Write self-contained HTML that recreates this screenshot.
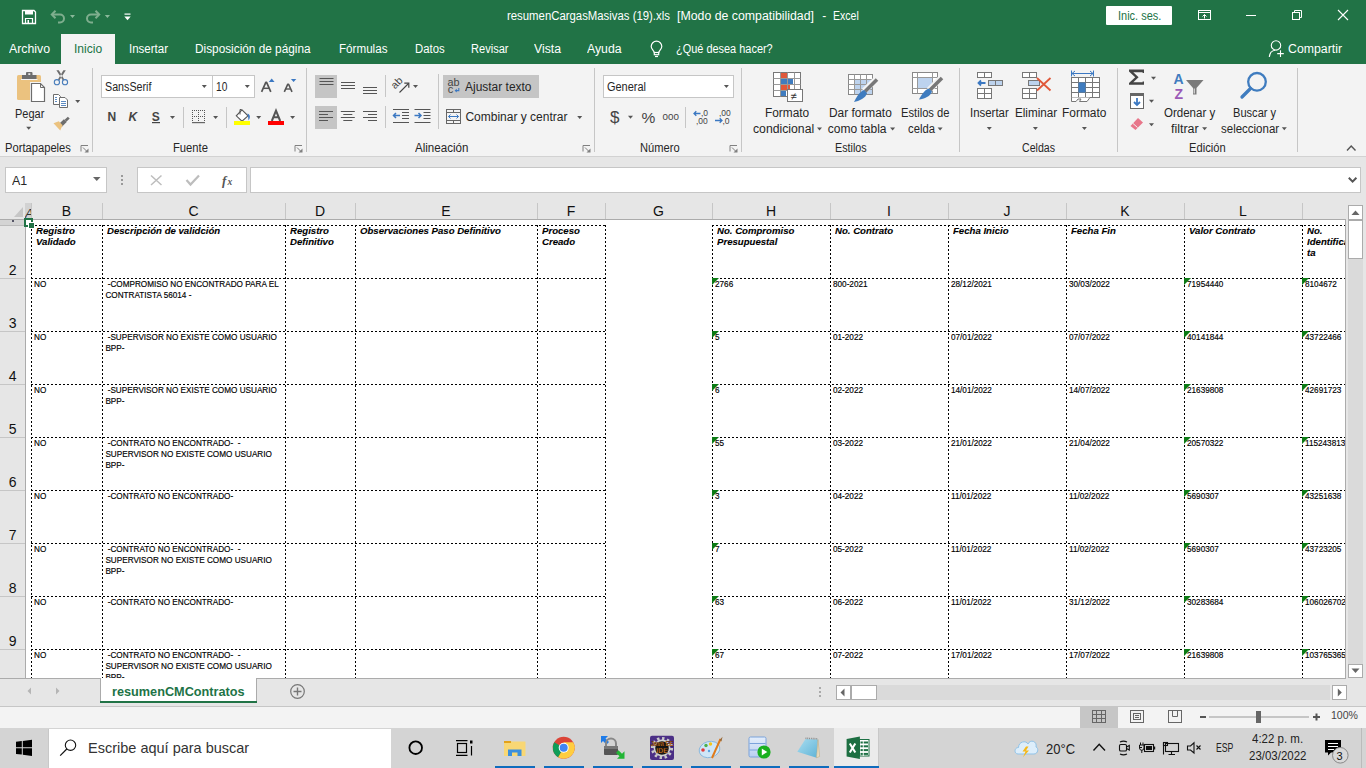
<!DOCTYPE html><html><head><meta charset="utf-8"><style>
*{box-sizing:border-box}
body{margin:0;width:1366px;height:768px;position:relative;overflow:hidden;font-family:"Liberation Sans",sans-serif;background:#fff;color:#262626}
.ab{position:absolute}
.t{position:absolute;white-space:pre;line-height:1;transform-origin:0 0}
.sep{position:absolute;width:1px;background:#c8c8c8}
.hd{position:absolute;background-image:repeating-linear-gradient(90deg,#000 0 2px,transparent 2px 4px);height:1px}
.vd{position:absolute;background-image:repeating-linear-gradient(180deg,#000 0 2px,transparent 2px 4px);width:1px}
.cell{position:absolute;font-size:8.18px;-webkit-text-stroke:0.15px #000;line-height:11px;color:#000;white-space:pre}
.hcell{position:absolute;font-size:8.5px;line-height:11px;color:#000;font-weight:bold;font-style:italic;white-space:pre;transform:scaleX(1.13);transform-origin:0 0;-webkit-text-stroke:0.1px #000}
svg{overflow:visible}
</style></head><body>

<div class="ab" style="left:0;top:0;width:1366px;height:64px;background:#217346"></div>
<div class="t" style="left:506.50px;top:9.84px;font-size:12px;color:#fff;transform:scaleX(0.9467);">resumenCargasMasivas (19).xls</div>
<div class="t" style="left:676.70px;top:9.84px;font-size:12px;color:#fff;transform:scaleX(1.0268);">[Modo de compatibilidad]</div>
<div class="t" style="left:822.30px;top:9.84px;font-size:12px;color:#fff;">-</div>
<div class="t" style="left:832.70px;top:9.84px;font-size:12px;color:#fff;transform:scaleX(0.8792);">Excel</div>
<div class="ab" style="left:1106px;top:6px;width:66px;height:19px;background:#fff;border-radius:1px"></div>
<div class="t" style="left:1117.50px;top:9.84px;font-size:12px;color:#217346;transform:scaleX(0.9143);">Inic. ses.</div>
<div class="ab" style="left:61px;top:34px;width:54px;height:30px;background:#f3f3f3"></div>
<div class="t" style="left:9.00px;top:42.84px;font-size:12px;color:#fff;transform:scaleX(1.0246);">Archivo</div>
<div class="t" style="left:73.80px;top:42.84px;font-size:12px;color:#217346;transform:scaleX(1.0066);">Inicio</div>
<div class="t" style="left:129.00px;top:42.84px;font-size:12px;color:#fff;transform:scaleX(0.9585);">Insertar</div>
<div class="t" style="left:195.40px;top:42.84px;font-size:12px;color:#fff;transform:scaleX(0.9845);">Disposición de página</div>
<div class="t" style="left:338.50px;top:42.84px;font-size:12px;color:#fff;transform:scaleX(0.9697);">Fórmulas</div>
<div class="t" style="left:414.60px;top:42.84px;font-size:12px;color:#fff;transform:scaleX(0.9439);">Datos</div>
<div class="t" style="left:471.00px;top:42.84px;font-size:12px;color:#fff;transform:scaleX(0.9217);">Revisar</div>
<div class="t" style="left:534.00px;top:42.84px;font-size:12px;color:#fff;transform:scaleX(1.0201);">Vista</div>
<div class="t" style="left:587.00px;top:42.84px;font-size:12px;color:#fff;transform:scaleX(1.0203);">Ayuda</div>
<div class="t" style="left:676.00px;top:42.84px;font-size:12px;color:#fff;transform:scaleX(0.9116);">¿Qué desea hacer?</div>
<div class="t" style="left:1288.00px;top:42.84px;font-size:12px;color:#fff;transform:scaleX(1.0249);">Compartir</div>
<svg class="ab" style="left:0;top:0" width="1366" height="64">
<path d="M22.5 10.5 H34 L35.5 12 V23.5 H22.5 Z" fill="none" stroke="#fff" stroke-width="1.3"/>
<rect x="25" y="10.5" width="8" height="4" fill="#fff"/><path d="M25.5 23.5 V18.5 H32.5 V23.5" fill="none" stroke="#fff" stroke-width="1.2"/><rect x="27.5" y="20" width="1.5" height="3" fill="#fff"/>
<g stroke="#7fae8e" stroke-width="2" fill="none"><path d="M52 14.5 H60 A4 4 0 0 1 60 22.5 H58"/><path d="M55.5 10.8 L51.8 14.5 L55.5 18.2"/>
<path d="M99 14.5 H91 A4 4 0 0 0 91 22.5 H93"/><path d="M95.5 10.8 L99.2 14.5 L95.5 18.2"/></g>
<path d="M70 15 H75 L72.5 18 Z M104.8 15 H110 L107.4 18 Z" fill="#8ab89a"/>
<rect x="124.5" y="13.5" width="6" height="1.2" fill="#fff"/><path d="M124.3 16.5 H130.7 L127.5 20.3 Z" fill="#fff"/>
<g fill="none" stroke="#fff" stroke-width="1"><rect x="1198.5" y="10.5" width="12" height="9"/><path d="M1198.5 12.5 H1210.5"/><path d="M1204.5 18.5 V14.5 M1202.5 16.5 L1204.5 14.5 L1206.5 16.5"/></g>
<path d="M1246 15.5 H1256" stroke="#fff" stroke-width="1"/>
<g fill="none" stroke="#fff" stroke-width="1"><rect x="1292.5" y="12.5" width="7" height="7"/><path d="M1294.5 12.5 V10.5 H1301.5 V17.5 H1299.5"/></g>
<path d="M1338 10 L1348 20 M1348 10 L1338 20" stroke="#fff" stroke-width="1.1"/>
<g fill="none" stroke="#fff" stroke-width="1.2"><path d="M654.3 52.5 C653.8 50.5 651.2 49 651.2 46.5 A5.3 5.3 0 0 1 661.8 46.5 C661.8 49 659.2 50.5 658.7 52.5 Z"/><rect x="654.3" y="52.5" width="4.4" height="2.2"/><path d="M655 56.5 H658"/></g>
<g fill="none" stroke="#fff" stroke-width="1.1"><circle cx="1276" cy="45.4" r="4.7"/><path d="M1269.3 57 C1269.6 53 1272 50.8 1275 50.3"/><path d="M1280.5 50.3 V57 M1277.2 53.6 H1283.8"/></g>
</svg>
<div class="ab" style="left:0;top:64px;width:1366px;height:92px;background:#f3f3f3"></div>
<div class="ab" style="left:0;top:156px;width:1366px;height:1px;background:#d2d2d2"></div>
<div class="sep" style="left:92px;top:68px;height:84px;background:#c6c6c6"></div>
<div class="sep" style="left:306px;top:68px;height:84px;background:#c6c6c6"></div>
<div class="sep" style="left:594px;top:68px;height:84px;background:#c6c6c6"></div>
<div class="sep" style="left:741px;top:68px;height:84px;background:#c6c6c6"></div>
<div class="sep" style="left:959px;top:68px;height:84px;background:#c6c6c6"></div>
<div class="sep" style="left:1117px;top:68px;height:84px;background:#c6c6c6"></div>
<div class="sep" style="left:1297px;top:68px;height:84px;background:#c6c6c6"></div>
<div class="t" style="left:4.50px;top:141.54px;font-size:12px;color:#262626;transform:scaleX(0.9319);">Portapapeles</div>
<div class="t" style="left:173.40px;top:141.54px;font-size:12px;color:#262626;transform:scaleX(0.9368);">Fuente</div>
<div class="t" style="left:415.30px;top:141.54px;font-size:12px;color:#262626;transform:scaleX(0.9643);">Alineación</div>
<div class="t" style="left:639.80px;top:141.54px;font-size:12px;color:#262626;transform:scaleX(0.9277);">Número</div>
<div class="t" style="left:834.70px;top:141.54px;font-size:12px;color:#262626;transform:scaleX(0.8969);">Estilos</div>
<div class="t" style="left:1021.50px;top:141.54px;font-size:12px;color:#262626;transform:scaleX(0.8833);">Celdas</div>
<div class="t" style="left:1188.70px;top:141.54px;font-size:12px;color:#262626;transform:scaleX(0.9299);">Edición</div>
<div class="ab" style="left:101px;top:75px;width:112px;height:23px;background:#fff;border:1px solid #c6c6c6"></div>
<div class="ab" style="left:212px;top:75px;width:43px;height:23px;background:#fff;border:1px solid #c6c6c6"></div>
<div class="ab" style="left:603px;top:75px;width:131px;height:23px;background:#fff;border:1px solid #c6c6c6"></div>
<div class="ab" style="left:315px;top:75px;width:22px;height:23px;background:#c5c5c5"></div>
<div class="ab" style="left:315px;top:106px;width:22px;height:23px;background:#c5c5c5"></div>
<div class="ab" style="left:443px;top:75px;width:96px;height:23px;background:#c5c5c5"></div>
<div class="t" style="left:14.60px;top:107.64px;font-size:12px;color:#262626;transform:scaleX(0.9147);">Pegar</div>
<div class="t" style="left:104.50px;top:81.34px;font-size:12px;color:#262626;transform:scaleX(0.8918);">SansSerif</div>
<div class="t" style="left:215.60px;top:81.34px;font-size:12px;color:#262626;transform:scaleX(0.8458);">10</div>
<div class="t" style="left:465.20px;top:80.64px;font-size:12px;color:#262626;transform:scaleX(0.9970);">Ajustar texto</div>
<div class="t" style="left:465.40px;top:111.34px;font-size:12px;color:#262626;">Combinar y centrar</div>
<div class="t" style="left:606.60px;top:81.34px;font-size:12px;color:#262626;transform:scaleX(0.9133);">General</div>
<div class="t" style="left:765.40px;top:106.64px;font-size:12px;color:#262626;transform:scaleX(0.9891);">Formato</div>
<div class="t" style="left:752.60px;top:123.04px;font-size:12px;color:#262626;transform:scaleX(1.0192);">condicional</div>
<div class="t" style="left:829.40px;top:106.64px;font-size:12px;color:#262626;transform:scaleX(0.9912);">Dar formato</div>
<div class="t" style="left:827.80px;top:123.04px;font-size:12px;color:#262626;">como tabla</div>
<div class="t" style="left:900.50px;top:106.64px;font-size:12px;color:#262626;transform:scaleX(0.9321);">Estilos de</div>
<div class="t" style="left:907.50px;top:123.04px;font-size:12px;color:#262626;transform:scaleX(0.9377);">celda</div>
<div class="t" style="left:970.20px;top:106.54px;font-size:12px;color:#262626;transform:scaleX(0.9512);">Insertar</div>
<div class="t" style="left:1014.60px;top:106.54px;font-size:12px;color:#262626;transform:scaleX(0.9713);">Eliminar</div>
<div class="t" style="left:1062.40px;top:106.54px;font-size:12px;color:#262626;transform:scaleX(0.9936);">Formato</div>
<div class="t" style="left:1163.80px;top:106.84px;font-size:12px;color:#262626;transform:scaleX(0.9595);">Ordenar y</div>
<div class="t" style="left:1170.90px;top:123.14px;font-size:12px;color:#262626;transform:scaleX(1.0385);">filtrar</div>
<div class="t" style="left:1232.80px;top:106.84px;font-size:12px;color:#262626;transform:scaleX(0.9232);">Buscar y</div>
<div class="t" style="left:1220.60px;top:123.14px;font-size:12px;color:#262626;transform:scaleX(0.9571);">seleccionar</div>
<svg class="ab" style="left:0;top:0" width="1366" height="200">
<rect x="17" y="75" width="24" height="25" rx="1.5" fill="#EBC27F"/>
<rect x="22" y="75" width="14.5" height="4" fill="#6D6D6D"/><rect x="26" y="72" width="6.5" height="4" rx="1" fill="#6D6D6D"/><rect x="28.3" y="73.3" width="2" height="1.6" fill="#f3f3f3"/>
<rect x="21" y="79" width="16.5" height="1" fill="#f3f3f3"/>
<path d="M30 82 H41 L46 87 V103 H30 Z" fill="#f3f3f3"/>
<path d="M31.5 83.5 H40.5 L44.5 87.5 V101.5 H31.5 Z" fill="#fff" stroke="#6D6D6D" stroke-width="1.2"/>
<path d="M40.5 83.5 V87.5 H44.5" fill="none" stroke="#6D6D6D" stroke-width="1"/>
<path d="M26.2 126.80000000000001 H31.2 L28.7 129.8 Z" fill="#555"/>
<path d="M56.4 70.3 L58.8 70.3 L64.3 79.4 L62.9 80.4 Z M65.8 70.3 L63.4 70.3 L57.9 79.4 L59.3 80.4 Z" fill="#6D6D6D"/>
<circle cx="56.9" cy="82.2" r="2.6" fill="none" stroke="#4A7EBB" stroke-width="1.1"/><circle cx="65" cy="82.2" r="2.6" fill="none" stroke="#4A7EBB" stroke-width="1.1"/>
<path d="M53.5 94.5 H58.5 L60.5 96.5 V104.5 H53.5 Z" fill="#fff" stroke="#6D6D6D" stroke-width="1"/>
<path d="M55 97.5 H57 M55 99.5 H57 M55 101.5 H57" stroke="#4A7EBB" stroke-width="0.9"/>
<path d="M59.5 97.5 H65 L67.5 100 V107.5 H59.5 Z" fill="#fff" stroke="#6D6D6D" stroke-width="1"/>
<path d="M61 101.5 H66 M61 103.5 H66 M61 105.5 H66" stroke="#4A7EBB" stroke-width="0.9"/>
<path d="M75.2 99.9 H80.2 L77.7 102.9 Z" fill="#555"/>
<path d="M65.5 120.8 L68.8 117.6" stroke="#6D6D6D" stroke-width="2.6"/>
<path d="M60.3 125.5 L65.3 120.6" stroke="#6D6D6D" stroke-width="4"/>
<path d="M53.5 123.2 L58.8 121.2 L62.6 125.2 L60.2 130.5 Z" fill="#EBC27F"/>
<g fill="none" stroke="#808080" stroke-width="1"><path d="M88.0 145.5 H81.0 V151.5"/><path d="M83.0 147.5 L87.5 152"/></g><path d="M88.5 148.5 V152.5 H84.5 Z" fill="#808080"/>
<g fill="none" stroke="#808080" stroke-width="1"><path d="M302.0 145.5 H295.0 V151.5"/><path d="M297.0 147.5 L301.5 152"/></g><path d="M302.5 148.5 V152.5 H298.5 Z" fill="#808080"/>
<g fill="none" stroke="#808080" stroke-width="1"><path d="M590.0 145.5 H583.0 V151.5"/><path d="M585.0 147.5 L589.5 152"/></g><path d="M590.5 148.5 V152.5 H586.5 Z" fill="#808080"/>
<g fill="none" stroke="#808080" stroke-width="1"><path d="M737.0 145.5 H730.0 V151.5"/><path d="M732.0 147.5 L736.5 152"/></g><path d="M737.5 148.5 V152.5 H733.5 Z" fill="#808080"/>
<path d="M201.8 85.0 H206.8 L204.3 88.0 Z" fill="#555"/>
<path d="M244.8 85.0 H249.8 L247.3 88.0 Z" fill="#555"/>
<path d="M261.6 91.9 L265.8 82.3 H266.6 L270.8 91.9" fill="none" stroke="#555" stroke-width="1.7" stroke-linejoin="round"/><path d="M263.4 88.3 H269" stroke="#555" stroke-width="1.5"/>
<path d="M268.8 81.9 L271.7 78.6 L274.6 81.9 Z" fill="#3B78C2"/>
<path d="M284.3 91.9 L287.8 84.2 H288.6 L292 91.9" fill="none" stroke="#555" stroke-width="1.6" stroke-linejoin="round"/><path d="M285.8 89 H290.5" stroke="#555" stroke-width="1.4"/>
<path d="M290.9 78.9 H296.3 L293.6 82.1 Z" fill="#3B78C2"/>
<text x="107.5" y="121.3" font-size="12" font-weight="bold" fill="#444" font-family="Liberation Sans">N</text>
<text x="128.5" y="121.3" font-size="12" font-weight="bold" font-style="italic" fill="#444" font-family="Liberation Sans">K</text>
<text x="151.8" y="121.3" font-size="12" font-weight="bold" fill="#444" font-family="Liberation Sans">S</text>
<rect x="152" y="122" width="8" height="1.2" fill="#444"/>
<path d="M170.0 115.9 H175.0 L172.5 118.9 Z" fill="#555"/>
<rect x="183" y="107" width="1" height="21" fill="#c6c6c6"/><rect x="226" y="107" width="1" height="21" fill="#c6c6c6"/>
<rect x="192" y="110" width="1" height="1" fill="#555"/><rect x="192" y="112" width="1" height="1" fill="#555"/><rect x="192" y="114" width="1" height="1" fill="#555"/><rect x="192" y="116" width="1" height="1" fill="#555"/><rect x="192" y="118" width="1" height="1" fill="#555"/><rect x="192" y="120" width="1" height="1" fill="#555"/><rect x="194" y="110" width="1" height="1" fill="#555"/><rect x="194" y="116" width="1" height="1" fill="#555"/><rect x="196" y="110" width="1" height="1" fill="#555"/><rect x="196" y="116" width="1" height="1" fill="#555"/><rect x="198" y="110" width="1" height="1" fill="#555"/><rect x="198" y="112" width="1" height="1" fill="#555"/><rect x="198" y="114" width="1" height="1" fill="#555"/><rect x="198" y="116" width="1" height="1" fill="#555"/><rect x="198" y="118" width="1" height="1" fill="#555"/><rect x="198" y="120" width="1" height="1" fill="#555"/><rect x="200" y="110" width="1" height="1" fill="#555"/><rect x="200" y="116" width="1" height="1" fill="#555"/><rect x="202" y="110" width="1" height="1" fill="#555"/><rect x="202" y="116" width="1" height="1" fill="#555"/><rect x="204" y="110" width="1" height="1" fill="#555"/><rect x="204" y="112" width="1" height="1" fill="#555"/><rect x="204" y="114" width="1" height="1" fill="#555"/><rect x="204" y="116" width="1" height="1" fill="#555"/><rect x="204" y="118" width="1" height="1" fill="#555"/><rect x="204" y="120" width="1" height="1" fill="#555"/><rect x="192" y="122" width="13" height="1.2" fill="#666"/>
<path d="M213.1 115.9 H218.1 L215.6 118.9 Z" fill="#555"/>
<path d="M242 109.8 L248 115.8 L242 121.2 L236.3 115.8 Z" fill="#fff" stroke="#555" stroke-width="1.1"/><path d="M240 109.5 V114.5 M240 109.5 H241.5" fill="none" stroke="#555" stroke-width="1"/><path d="M247.5 113.5 C250.5 114.5 250.5 118 248.5 120.5 L248 116 Z" fill="#3B78C2"/>
<rect x="234" y="121" width="16" height="4" fill="#FFFF00"/>
<path d="M256.2 115.9 H261.2 L258.7 118.9 Z" fill="#555"/>
<path d="M271.8 121 L276 110.7 L280.2 121 M273.6 117.2 H278.4" fill="none" stroke="#555" stroke-width="2"/>
<rect x="268" y="121" width="16" height="4" fill="#FF0000"/>
<path d="M290.1 115.9 H295.1 L292.6 118.9 Z" fill="#555"/>
<rect x="319.5" y="78" width="14" height="1" fill="#555"/>
<rect x="319.5" y="81" width="14" height="1" fill="#555"/>
<rect x="319.5" y="84" width="14" height="1" fill="#555"/>
<rect x="341" y="82" width="14" height="1" fill="#555"/>
<rect x="341" y="85" width="14" height="1" fill="#555"/>
<rect x="341" y="88" width="14" height="1" fill="#555"/>
<rect x="363" y="87" width="14" height="1" fill="#555"/>
<rect x="363" y="90" width="14" height="1" fill="#555"/>
<rect x="363" y="93" width="14" height="1" fill="#555"/>
<rect x="385" y="75" width="1" height="22" fill="#c6c6c6"/><rect x="438" y="74" width="1" height="55" fill="#c6c6c6"/><rect x="385" y="106" width="1" height="22" fill="#c6c6c6"/>
<text x="0" y="0" font-size="10.5" fill="#444" font-family="Liberation Sans" transform="translate(395,89.5) rotate(-45)">ab</text><path d="M399.5 92.5 L408.5 83.5" fill="none" stroke="#444" stroke-width="1.1"/><path d="M404.3 83.2 H408.8 V87.7" fill="none" stroke="#444" stroke-width="1.2"/>
<path d="M413.0 85.0 H418.0 L415.5 88.0 Z" fill="#555"/>
<text x="447.6" y="85.8" font-size="11" fill="#444" font-family="Liberation Sans" textLength="12" lengthAdjust="spacingAndGlyphs">ab</text><text x="447.8" y="92.8" font-size="11" fill="#444" font-family="Liberation Sans">c</text><path d="M458.8 88 V90.6 H455.5" fill="none" stroke="#3B78C2" stroke-width="1.1"/><path d="M454.6 90.6 L456.8 88.8 V92.4 Z" fill="#3B78C2"/>
<rect x="319" y="111" width="14" height="1" fill="#555"/>
<rect x="319" y="114" width="9" height="1" fill="#555"/>
<rect x="319" y="117" width="14" height="1" fill="#555"/>
<rect x="319" y="120" width="9" height="1" fill="#555"/>
<rect x="340.8" y="111" width="14" height="1" fill="#555"/>
<rect x="343.3" y="114" width="9" height="1" fill="#555"/>
<rect x="340.8" y="117" width="14" height="1" fill="#555"/>
<rect x="343.3" y="120" width="9" height="1" fill="#555"/>
<rect x="363" y="111" width="14" height="1" fill="#555"/>
<rect x="368" y="114" width="9" height="1" fill="#555"/>
<rect x="363" y="117" width="14" height="1" fill="#555"/>
<rect x="368" y="120" width="9" height="1" fill="#555"/>
<rect x="393" y="109" width="16" height="1" fill="#555"/>
<rect x="393" y="122" width="16" height="1" fill="#555"/>
<rect x="402" y="112" width="7" height="1" fill="#555"/>
<rect x="402" y="115" width="7" height="1" fill="#555"/>
<rect x="402" y="118" width="7" height="1" fill="#555"/>
<path d="M400 115.5 H393.5 M396 113 L393.5 115.5 L396 118" fill="none" stroke="#3B78C2" stroke-width="1.5"/>
<rect x="414.5" y="109" width="16" height="1" fill="#555"/>
<rect x="414.5" y="122" width="16" height="1" fill="#555"/>
<rect x="423.5" y="112" width="7" height="1" fill="#555"/>
<rect x="423.5" y="115" width="7" height="1" fill="#555"/>
<rect x="423.5" y="118" width="7" height="1" fill="#555"/>
<path d="M414.5 115.5 H421 M418.5 113 L421 115.5 L418.5 118" fill="none" stroke="#3B78C2" stroke-width="1.5"/>
<g fill="none" stroke="#666" stroke-width="1"><rect x="446.5" y="109.5" width="14" height="14"/><path d="M446.5 112.5 H460.5 M446.5 120.5 H460.5 M453.5 109.5 V112.5 M453.5 120.5 V123.5"/></g>
<path d="M448.5 116.5 H458.5 M450.5 114.5 L448.5 116.5 L450.5 118.5 M456.5 114.5 L458.5 116.5 L456.5 118.5" fill="none" stroke="#3B78C2" stroke-width="1"/>
<path d="M577.2 115.9 H582.2 L579.7 118.9 Z" fill="#555"/>
<path d="M723.9 85.0 H728.9 L726.4 88.0 Z" fill="#555"/>
<text x="610" y="123" font-size="17" fill="#444" font-family="Liberation Sans">$</text>
<path d="M628.0 115.8 H633.0 L630.5 118.8 Z" fill="#555"/>
<text x="641.5" y="123" font-size="15.5" fill="#444" font-family="Liberation Sans">%</text>
<text x="662.5" y="120" font-size="9.8" fill="#444" font-family="Liberation Sans">000</text>
<rect x="685" y="107" width="1" height="21" fill="#c6c6c6"/>
<text x="701" y="116" font-size="8.5" fill="#444" font-family="Liberation Sans">,0</text><text x="696" y="124" font-size="8.5" fill="#444" font-family="Liberation Sans">,00</text>
<path d="M700.5 113.5 H694 M696.3 111.2 L694 113.5 L696.3 115.8" fill="none" stroke="#3B78C2" stroke-width="1.3"/>
<text x="719" y="116" font-size="8.5" fill="#444" font-family="Liberation Sans">,00</text><text x="722.5" y="124" font-size="8.5" fill="#444" font-family="Liberation Sans">,0</text>
<path d="M715 120.5 H722 M719.7 118.2 L722 120.5 L719.7 122.8" fill="none" stroke="#3B78C2" stroke-width="1.3"/>
<g fill="#fff" stroke="#777" stroke-width="1"><rect x="773.5" y="72.5" width="27" height="24"/></g>
<rect x="781" y="73" width="6" height="5" fill="#E0583A"/><rect x="781" y="79" width="12" height="5" fill="#3F7CBF"/><rect x="781" y="85" width="9" height="5" fill="#E0583A"/><rect x="781" y="91" width="5" height="5" fill="#3F7CBF"/>
<g stroke="#999" stroke-width="1" fill="none"><path d="M773.5 78.5 H800.5 M773.5 84.5 H800.5 M773.5 90.5 H800.5 M780.5 72.5 V96.5 M787.5 72.5 V96.5 M794.5 72.5 V96.5"/></g>
<rect x="787.5" y="89.5" width="15" height="12" fill="#fff" stroke="#777" stroke-width="1"/><text x="790.5" y="99.5" font-size="11" fill="#333" font-family="Liberation Sans">≠</text>
<path d="M817.0 127.5 H822.0 L819.5 130.5 Z" fill="#555"/>
<rect x="848.5" y="74.5" width="24" height="20" fill="#fff" stroke="#888"/><rect x="855" y="80" width="17" height="14" fill="#BDD3EE"/>
<g stroke="#999" fill="none"><path d="M848.5 79.5 H872.5 M848.5 84.5 H872.5 M848.5 89.5 H872.5 M854.5 74.5 V94.5 M860.5 74.5 V94.5 M866.5 74.5 V94.5"/></g>
<path d="M876.5 79 L864 91" stroke="#f3f3f3" stroke-width="6"/><path d="M877 79.5 L865 91.5" stroke="#777" stroke-width="3.5"/>
<path d="M864 90 C859 92 856 98 854 102 C859 101 866 98 867 93 Z" fill="#3F7CBF"/>
<path d="M890.1 127.5 H895.1 L892.6 130.5 Z" fill="#555"/>
<rect x="912.5" y="72.5" width="25" height="21" fill="#fff" stroke="#888"/><rect x="918" y="78" width="14" height="10" fill="#BDD3EE"/>
<g stroke="#999" fill="none"><path d="M912.5 77.5 H937.5 M912.5 88.5 H937.5 M917.5 72.5 V93.5 M932.5 72.5 V93.5"/></g>
<path d="M941.5 77.5 L929 90" stroke="#f3f3f3" stroke-width="6"/><path d="M942 78 L930 90" stroke="#777" stroke-width="3.5"/>
<path d="M929 88.5 C924 90 921 96 919 99.5 C924 99 931 96 932 91.5 Z" fill="#3F7CBF"/>
<path d="M937.6 127.5 H942.6 L940.1 130.5 Z" fill="#555"/>
<rect x="977.5" y="72.5" width="14" height="5" fill="#fff" stroke="#777"/>
<path d="M984.5 72.5 V77.5" stroke="#777"/>
<rect x="988.5" y="80.5" width="14" height="5" fill="#BDD3EE" stroke="#777"/>
<path d="M995.5 80.5 V85.5" stroke="#777"/>
<rect x="977.5" y="88.5" width="14" height="10" fill="#fff" stroke="#777"/>
<path d="M984.5 88.5 V98.5" stroke="#777"/>
<path d="M977.5 93.5 H991.5" stroke="#777"/>
<path d="M985.5 83 H978.5 M981 80.5 L978.5 83 L981 85.5" fill="none" stroke="#3B78C2" stroke-width="1.8"/>
<path d="M986.8 127.1 H991.8 L989.3 130.1 Z" fill="#555"/>
<rect x="1022.5" y="72.5" width="14" height="5" fill="#fff" stroke="#777"/>
<path d="M1029.5 72.5 V77.5" stroke="#777"/>
<rect x="1028.5" y="80.5" width="11" height="5" fill="#BDD3EE" stroke="#777"/>
<rect x="1022.5" y="88.5" width="14" height="10" fill="#fff" stroke="#777"/>
<path d="M1029.5 88.5 V98.5" stroke="#777"/>
<path d="M1022.5 93.5 H1036.5" stroke="#777"/>
<path d="M1037 78 L1050.5 90.5 M1050.5 78 L1037 90.5" stroke="#E0583A" stroke-width="1.8"/>
<path d="M1032.9 127.1 H1037.9 L1035.4 130.1 Z" fill="#555"/>
<path d="M1071.5 70.5 V76.5 M1093.5 70.5 V76.5 M1072 73.5 H1093 M1075 71 L1072 73.5 L1075 76 M1090 71 L1093 73.5 L1090 76" fill="none" stroke="#3B78C2" stroke-width="1"/>
<rect x="1071.5" y="77.5" width="28" height="20" fill="#fff" stroke="#777"/>
<path d="M1078.5 77.5 V97.5" stroke="#777"/>
<path d="M1085.5 77.5 V97.5" stroke="#777"/>
<path d="M1092.5 77.5 V97.5" stroke="#777"/>
<path d="M1071.5 82.5 H1099.5" stroke="#777"/>
<path d="M1071.5 87.5 H1099.5" stroke="#777"/>
<path d="M1071.5 92.5 H1099.5" stroke="#777"/>
<rect x="1078.5" y="82.5" width="7" height="10" fill="#3F7CBF"/>
<path d="M1071.5 97.5 V101.5 H1076 L1078 99 H1081 L1079.5 101.5 H1087 L1090 97.5" fill="#fff" stroke="#777"/>
<path d="M1081.9 127.1 H1086.9 L1084.4 130.1 Z" fill="#555"/>
<path d="M1129 69.6 H1144 V73 H1142.6 V72.2 H1133.3 L1138.6 77.3 L1133.3 82.3 H1142.6 V81.4 H1144 V84.8 H1129 V83 L1135.2 77.3 L1129 71.5 Z" fill="#444"/>
<path d="M1151.0 76.8 H1156.0 L1153.5 79.8 Z" fill="#555"/>
<rect x="1130.5" y="93.5" width="13" height="15" fill="#fff" stroke="#666"/><rect x="1130" y="93" width="14" height="3" fill="#666"/>
<path d="M1137 98 V105 M1134 102 L1137 105 L1140 102" fill="none" stroke="#3B78C2" stroke-width="1.8"/>
<path d="M1149.0 99.8 H1154.0 L1151.5 102.8 Z" fill="#555"/>
<path d="M1130.5 126 L1138 118 L1143 122.5 L1135.5 130 Z" fill="#E8768A"/><path d="M1133 123.5 L1137.5 127.5" stroke="#f3f3f3" stroke-width="1"/>
<path d="M1149.0 123.3 H1154.0 L1151.5 126.3 Z" fill="#555"/>
<text x="1173.5" y="84.3" font-size="14" font-weight="bold" fill="#3F7CBF" font-family="Liberation Sans">A</text>
<text x="1174.5" y="98.8" font-size="14" font-weight="bold" fill="#9B59B6" font-family="Liberation Sans">Z</text>
<path d="M1186 80 H1203.5 L1196.5 88 V94.5 H1193 V88 Z" fill="#7a7a7a"/><path d="M1194.2 88.5 V93.5" stroke="#f3f3f3" stroke-width="1"/>
<path d="M1202.1 127.19999999999999 H1207.1 L1204.6 130.2 Z" fill="#555"/>
<circle cx="1257" cy="81.8" r="8.8" fill="none" stroke="#3F7CBF" stroke-width="2.3"/><path d="M1250.5 88.5 L1242 97" stroke="#3F7CBF" stroke-width="3.3" stroke-linecap="round"/>
<path d="M1281.8 127.19999999999999 H1286.8 L1284.3 130.2 Z" fill="#555"/>
<path d="M1347 150.5 L1351.2 146 L1355.5 150.5" fill="none" stroke="#555" stroke-width="1.4"/>
</svg>
<div class="ab" style="left:0;top:157px;width:1366px;height:46px;background:#e6e6e6"></div>
<div class="ab" style="left:5px;top:167px;width:102px;height:26px;background:#fff;border:1px solid #c6c6c6"></div>
<div class="t" style="left:12.40px;top:175.22px;font-size:12.5px;color:#262626;transform:scaleX(0.9937);">A1</div>
<div class="ab" style="left:137px;top:167px;width:110px;height:26px;background:#fff;border:1px solid #c6c6c6"></div>
<div class="ab" style="left:250px;top:167px;width:1111px;height:26px;background:#fff;border:1px solid #c6c6c6"></div>
<svg class="ab" style="left:0;top:0" width="1366" height="203">
<path d="M93 177 H100.5 L96.75 181 Z" fill="#666"/>
<rect x="121" y="175" width="2" height="2" fill="#999"/><rect x="121" y="179" width="2" height="2" fill="#999"/><rect x="121" y="183" width="2" height="2" fill="#999"/>
<path d="M151 175.5 L161.5 185 M161.5 175.5 L151 185" stroke="#bdbdbd" stroke-width="1.5"/>
<path d="M186.5 180 L190.5 184.5 L199 175.5" fill="none" stroke="#bdbdbd" stroke-width="2.2"/>
<text x="222" y="184.5" font-size="13" font-style="italic" font-weight="bold" fill="#555" font-family="Liberation Serif">f</text><text x="227.5" y="184.5" font-size="9.5" font-style="italic" font-weight="bold" fill="#555" font-family="Liberation Serif">x</text>
<path d="M1348.8 177.8 L1352.6 181.6 L1356.4 177.8" fill="none" stroke="#555" stroke-width="2"/>
</svg>
<div class="ab" style="left:0;top:203px;width:1346px;height:16px;background:#e6e6e6"></div>
<div class="ab" style="left:25px;top:203px;width:7px;height:16px;background:#d2d2d2"></div>
<div class="ab" style="left:0;top:219px;width:1346px;height:1px;background:#ababab"></div>
<svg class="ab" style="left:0;top:0" width="40" height="230"><path d="M14 217 L23 207 V217 Z" fill="#c6c6c6"/></svg>
<div class="sep" style="left:31px;top:203px;height:16px;background:#c6c6c6"></div>
<div class="sep" style="left:102px;top:203px;height:16px;background:#c6c6c6"></div>
<div class="t" style="left:61.83px;top:204.45px;font-size:14px;color:#111;">B</div>
<div class="sep" style="left:285px;top:203px;height:16px;background:#c6c6c6"></div>
<div class="t" style="left:188.44px;top:204.45px;font-size:14px;color:#111;">C</div>
<div class="sep" style="left:355px;top:203px;height:16px;background:#c6c6c6"></div>
<div class="t" style="left:314.94px;top:204.45px;font-size:14px;color:#111;">D</div>
<div class="sep" style="left:537px;top:203px;height:16px;background:#c6c6c6"></div>
<div class="t" style="left:441.33px;top:204.45px;font-size:14px;color:#111;">E</div>
<div class="sep" style="left:605px;top:203px;height:16px;background:#c6c6c6"></div>
<div class="t" style="left:566.72px;top:204.45px;font-size:14px;color:#111;">F</div>
<div class="sep" style="left:712px;top:203px;height:16px;background:#c6c6c6"></div>
<div class="t" style="left:653.05px;top:204.45px;font-size:14px;color:#111;">G</div>
<div class="sep" style="left:830px;top:203px;height:16px;background:#c6c6c6"></div>
<div class="t" style="left:765.94px;top:204.45px;font-size:14px;color:#111;">H</div>
<div class="sep" style="left:948px;top:203px;height:16px;background:#c6c6c6"></div>
<div class="t" style="left:887.05px;top:204.45px;font-size:14px;color:#111;">I</div>
<div class="sep" style="left:1066px;top:203px;height:16px;background:#c6c6c6"></div>
<div class="t" style="left:1003.50px;top:204.45px;font-size:14px;color:#111;">J</div>
<div class="sep" style="left:1184px;top:203px;height:16px;background:#c6c6c6"></div>
<div class="t" style="left:1120.33px;top:204.45px;font-size:14px;color:#111;">K</div>
<div class="sep" style="left:1302px;top:203px;height:16px;background:#c6c6c6"></div>
<div class="t" style="left:1239.10px;top:204.45px;font-size:14px;color:#111;">L</div>
<div class="ab" style="left:25px;top:203px;width:6px;height:16px;overflow:hidden"><div class="t" style="left:0px;top:4px;font-size:13px;color:#333;font-style:italic">A</div></div>
<div class="ab" style="left:0;top:220px;width:25px;height:458px;background:#e6e6e6"></div>
<div class="ab" style="left:0;top:220px;width:25px;height:5px;background:#d4d4d4"></div>
<div class="ab" style="left:12px;top:220px;width:2px;height:2px;background:#556"></div>
<div class="ab" style="left:25px;top:219px;width:1px;height:459px;background:#ababab"></div>
<div class="ab" style="left:0;top:225px;width:25px;height:1px;background:#bcbcbc"></div>
<div class="ab" style="left:0;top:278px;width:25px;height:1px;background:#c6c6c6"></div>
<div class="t" style="left:8.70px;top:263.15px;font-size:14px;color:#111;">2</div>
<div class="ab" style="left:0;top:331px;width:25px;height:1px;background:#c6c6c6"></div>
<div class="t" style="left:8.70px;top:316.15px;font-size:14px;color:#111;">3</div>
<div class="ab" style="left:0;top:384px;width:25px;height:1px;background:#c6c6c6"></div>
<div class="t" style="left:8.70px;top:369.15px;font-size:14px;color:#111;">4</div>
<div class="ab" style="left:0;top:437px;width:25px;height:1px;background:#c6c6c6"></div>
<div class="t" style="left:8.70px;top:422.15px;font-size:14px;color:#111;">5</div>
<div class="ab" style="left:0;top:490px;width:25px;height:1px;background:#c6c6c6"></div>
<div class="t" style="left:8.70px;top:475.15px;font-size:14px;color:#111;">6</div>
<div class="ab" style="left:0;top:543px;width:25px;height:1px;background:#c6c6c6"></div>
<div class="t" style="left:8.70px;top:528.15px;font-size:14px;color:#111;">7</div>
<div class="ab" style="left:0;top:596px;width:25px;height:1px;background:#c6c6c6"></div>
<div class="t" style="left:8.70px;top:581.15px;font-size:14px;color:#111;">8</div>
<div class="ab" style="left:0;top:649px;width:25px;height:1px;background:#c6c6c6"></div>
<div class="t" style="left:8.70px;top:634.15px;font-size:14px;color:#111;">9</div>
<div class="ab" style="left:26px;top:220px;width:1319px;height:458px;background:#fff;overflow:hidden">
<div class="hd" style="left:5px;top:5px;width:575px"></div>
<div class="hd" style="left:5px;top:58px;width:575px"></div>
<div class="hd" style="left:5px;top:111px;width:575px"></div>
<div class="hd" style="left:5px;top:164px;width:575px"></div>
<div class="hd" style="left:5px;top:217px;width:575px"></div>
<div class="hd" style="left:5px;top:270px;width:575px"></div>
<div class="hd" style="left:5px;top:323px;width:575px"></div>
<div class="hd" style="left:5px;top:376px;width:575px"></div>
<div class="hd" style="left:5px;top:429px;width:575px"></div>
<div class="vd" style="left:5px;top:5px;height:460px"></div>
<div class="vd" style="left:76px;top:5px;height:460px"></div>
<div class="vd" style="left:259px;top:5px;height:460px"></div>
<div class="vd" style="left:329px;top:5px;height:460px"></div>
<div class="vd" style="left:511px;top:5px;height:460px"></div>
<div class="vd" style="left:579px;top:5px;height:460px"></div>
<div class="vd" style="left:5px;top:5px;height:460px"></div>
<div class="hd" style="left:686px;top:5px;width:634px"></div>
<div class="hd" style="left:686px;top:58px;width:634px"></div>
<div class="hd" style="left:686px;top:111px;width:634px"></div>
<div class="hd" style="left:686px;top:164px;width:634px"></div>
<div class="hd" style="left:686px;top:217px;width:634px"></div>
<div class="hd" style="left:686px;top:270px;width:634px"></div>
<div class="hd" style="left:686px;top:323px;width:634px"></div>
<div class="hd" style="left:686px;top:376px;width:634px"></div>
<div class="hd" style="left:686px;top:429px;width:634px"></div>
<div class="vd" style="left:686px;top:5px;height:460px"></div>
<div class="vd" style="left:804px;top:5px;height:460px"></div>
<div class="vd" style="left:922px;top:5px;height:460px"></div>
<div class="vd" style="left:1040px;top:5px;height:460px"></div>
<div class="vd" style="left:1158px;top:5px;height:460px"></div>
<div class="vd" style="left:1276px;top:5px;height:460px"></div>
<div class="vd" style="left:686px;top:5px;height:460px"></div>
<div class="hcell" style="left:9.600000000000001px;top:5.699999999999989px;width:58.8px;overflow:hidden">Registro
Validado</div>
<div class="hcell" style="left:80.6px;top:5.699999999999989px;width:157.9px;overflow:hidden">Descripción de validción</div>
<div class="hcell" style="left:263.6px;top:5.699999999999989px;width:57.9px;overflow:hidden">Registro
Definitivo</div>
<div class="hcell" style="left:333.6px;top:5.699999999999989px;width:157.0px;overflow:hidden">Observaciones Paso Definitivo</div>
<div class="hcell" style="left:515.6px;top:5.699999999999989px;width:56.1px;overflow:hidden">Proceso
Creado</div>
<div class="hcell" style="left:690.6px;top:5.699999999999989px;width:100.4px;overflow:hidden">No. Compromiso
Presupuestal</div>
<div class="hcell" style="left:808.6px;top:5.699999999999989px;width:100.4px;overflow:hidden">No. Contrato</div>
<div class="hcell" style="left:926.6px;top:5.699999999999989px;width:100.4px;overflow:hidden">Fecha Inicio</div>
<div class="hcell" style="left:1044.6px;top:5.699999999999989px;width:100.4px;overflow:hidden">Fecha Fin</div>
<div class="hcell" style="left:1162.6px;top:5.699999999999989px;width:100.4px;overflow:hidden">Valor Contrato</div>
<div class="hcell" style="left:1280.6px;top:5.699999999999989px;width:34.0px;overflow:hidden">No.
Identifica
ta</div>
<div class="cell" style="left:8px;top:59px">NO</div>
<div class="cell" style="left:79.4px;top:59px"> -COMPROMISO NO ENCONTRADO PARA EL
CONTRATISTA 56014 -</div>
<div class="cell" style="left:689px;top:59px;width:115px;overflow:hidden">2766</div>
<div class="ab" style="left:686px;top:58px;width:0;height:0;border-top:7px solid #0b7a14;border-right:7px solid transparent"></div>
<div class="cell" style="left:807px;top:59px;width:115px;overflow:hidden">800-2021</div>
<div class="cell" style="left:925px;top:59px;width:115px;overflow:hidden">28/12/2021</div>
<div class="cell" style="left:1043px;top:59px;width:115px;overflow:hidden">30/03/2022</div>
<div class="cell" style="left:1161px;top:59px;width:115px;overflow:hidden">71954440</div>
<div class="ab" style="left:1158px;top:58px;width:0;height:0;border-top:7px solid #0b7a14;border-right:7px solid transparent"></div>
<div class="cell" style="left:1279px;top:59px;width:40px;overflow:hidden">8104672</div>
<div class="ab" style="left:1276px;top:58px;width:0;height:0;border-top:7px solid #0b7a14;border-right:7px solid transparent"></div>
<div class="cell" style="left:8px;top:112px">NO</div>
<div class="cell" style="left:79.4px;top:112px"> -SUPERVISOR NO EXISTE COMO USUARIO
BPP-</div>
<div class="cell" style="left:689px;top:112px;width:115px;overflow:hidden">5</div>
<div class="ab" style="left:686px;top:111px;width:0;height:0;border-top:7px solid #0b7a14;border-right:7px solid transparent"></div>
<div class="cell" style="left:807px;top:112px;width:115px;overflow:hidden">01-2022</div>
<div class="cell" style="left:925px;top:112px;width:115px;overflow:hidden">07/01/2022</div>
<div class="cell" style="left:1043px;top:112px;width:115px;overflow:hidden">07/07/2022</div>
<div class="cell" style="left:1161px;top:112px;width:115px;overflow:hidden">40141844</div>
<div class="ab" style="left:1158px;top:111px;width:0;height:0;border-top:7px solid #0b7a14;border-right:7px solid transparent"></div>
<div class="cell" style="left:1279px;top:112px;width:40px;overflow:hidden">43722466</div>
<div class="ab" style="left:1276px;top:111px;width:0;height:0;border-top:7px solid #0b7a14;border-right:7px solid transparent"></div>
<div class="cell" style="left:8px;top:165px">NO</div>
<div class="cell" style="left:79.4px;top:165px"> -SUPERVISOR NO EXISTE COMO USUARIO
BPP-</div>
<div class="cell" style="left:689px;top:165px;width:115px;overflow:hidden">6</div>
<div class="ab" style="left:686px;top:164px;width:0;height:0;border-top:7px solid #0b7a14;border-right:7px solid transparent"></div>
<div class="cell" style="left:807px;top:165px;width:115px;overflow:hidden">02-2022</div>
<div class="cell" style="left:925px;top:165px;width:115px;overflow:hidden">14/01/2022</div>
<div class="cell" style="left:1043px;top:165px;width:115px;overflow:hidden">14/07/2022</div>
<div class="cell" style="left:1161px;top:165px;width:115px;overflow:hidden">21639808</div>
<div class="ab" style="left:1158px;top:164px;width:0;height:0;border-top:7px solid #0b7a14;border-right:7px solid transparent"></div>
<div class="cell" style="left:1279px;top:165px;width:40px;overflow:hidden">42691723</div>
<div class="ab" style="left:1276px;top:164px;width:0;height:0;border-top:7px solid #0b7a14;border-right:7px solid transparent"></div>
<div class="cell" style="left:8px;top:218px">NO</div>
<div class="cell" style="left:79.4px;top:218px"> -CONTRATO NO ENCONTRADO-  - 
SUPERVISOR NO EXISTE COMO USUARIO
BPP-</div>
<div class="cell" style="left:689px;top:218px;width:115px;overflow:hidden">55</div>
<div class="ab" style="left:686px;top:217px;width:0;height:0;border-top:7px solid #0b7a14;border-right:7px solid transparent"></div>
<div class="cell" style="left:807px;top:218px;width:115px;overflow:hidden">03-2022</div>
<div class="cell" style="left:925px;top:218px;width:115px;overflow:hidden">21/01/2022</div>
<div class="cell" style="left:1043px;top:218px;width:115px;overflow:hidden">21/04/2022</div>
<div class="cell" style="left:1161px;top:218px;width:115px;overflow:hidden">20570322</div>
<div class="ab" style="left:1158px;top:217px;width:0;height:0;border-top:7px solid #0b7a14;border-right:7px solid transparent"></div>
<div class="cell" style="left:1279px;top:218px;width:40px;overflow:hidden">115243813</div>
<div class="ab" style="left:1276px;top:217px;width:0;height:0;border-top:7px solid #0b7a14;border-right:7px solid transparent"></div>
<div class="cell" style="left:8px;top:271px">NO</div>
<div class="cell" style="left:79.4px;top:271px"> -CONTRATO NO ENCONTRADO-</div>
<div class="cell" style="left:689px;top:271px;width:115px;overflow:hidden">3</div>
<div class="ab" style="left:686px;top:270px;width:0;height:0;border-top:7px solid #0b7a14;border-right:7px solid transparent"></div>
<div class="cell" style="left:807px;top:271px;width:115px;overflow:hidden">04-2022</div>
<div class="cell" style="left:925px;top:271px;width:115px;overflow:hidden">11/01/2022</div>
<div class="cell" style="left:1043px;top:271px;width:115px;overflow:hidden">11/02/2022</div>
<div class="cell" style="left:1161px;top:271px;width:115px;overflow:hidden">5690307</div>
<div class="ab" style="left:1158px;top:270px;width:0;height:0;border-top:7px solid #0b7a14;border-right:7px solid transparent"></div>
<div class="cell" style="left:1279px;top:271px;width:40px;overflow:hidden">43251638</div>
<div class="ab" style="left:1276px;top:270px;width:0;height:0;border-top:7px solid #0b7a14;border-right:7px solid transparent"></div>
<div class="cell" style="left:8px;top:324px">NO</div>
<div class="cell" style="left:79.4px;top:324px"> -CONTRATO NO ENCONTRADO-  - 
SUPERVISOR NO EXISTE COMO USUARIO
BPP-</div>
<div class="cell" style="left:689px;top:324px;width:115px;overflow:hidden">7</div>
<div class="ab" style="left:686px;top:323px;width:0;height:0;border-top:7px solid #0b7a14;border-right:7px solid transparent"></div>
<div class="cell" style="left:807px;top:324px;width:115px;overflow:hidden">05-2022</div>
<div class="cell" style="left:925px;top:324px;width:115px;overflow:hidden">11/01/2022</div>
<div class="cell" style="left:1043px;top:324px;width:115px;overflow:hidden">11/02/2022</div>
<div class="cell" style="left:1161px;top:324px;width:115px;overflow:hidden">5690307</div>
<div class="ab" style="left:1158px;top:323px;width:0;height:0;border-top:7px solid #0b7a14;border-right:7px solid transparent"></div>
<div class="cell" style="left:1279px;top:324px;width:40px;overflow:hidden">43723205</div>
<div class="ab" style="left:1276px;top:323px;width:0;height:0;border-top:7px solid #0b7a14;border-right:7px solid transparent"></div>
<div class="cell" style="left:8px;top:377px">NO</div>
<div class="cell" style="left:79.4px;top:377px"> -CONTRATO NO ENCONTRADO-</div>
<div class="cell" style="left:689px;top:377px;width:115px;overflow:hidden">63</div>
<div class="ab" style="left:686px;top:376px;width:0;height:0;border-top:7px solid #0b7a14;border-right:7px solid transparent"></div>
<div class="cell" style="left:807px;top:377px;width:115px;overflow:hidden">06-2022</div>
<div class="cell" style="left:925px;top:377px;width:115px;overflow:hidden">11/01/2022</div>
<div class="cell" style="left:1043px;top:377px;width:115px;overflow:hidden">31/12/2022</div>
<div class="cell" style="left:1161px;top:377px;width:115px;overflow:hidden">30283684</div>
<div class="ab" style="left:1158px;top:376px;width:0;height:0;border-top:7px solid #0b7a14;border-right:7px solid transparent"></div>
<div class="cell" style="left:1279px;top:377px;width:40px;overflow:hidden">106026702</div>
<div class="ab" style="left:1276px;top:376px;width:0;height:0;border-top:7px solid #0b7a14;border-right:7px solid transparent"></div>
<div class="cell" style="left:8px;top:430px">NO</div>
<div class="cell" style="left:79.4px;top:430px"> -CONTRATO NO ENCONTRADO-  - 
SUPERVISOR NO EXISTE COMO USUARIO
BPP-</div>
<div class="cell" style="left:689px;top:430px;width:115px;overflow:hidden">67</div>
<div class="ab" style="left:686px;top:429px;width:0;height:0;border-top:7px solid #0b7a14;border-right:7px solid transparent"></div>
<div class="cell" style="left:807px;top:430px;width:115px;overflow:hidden">07-2022</div>
<div class="cell" style="left:925px;top:430px;width:115px;overflow:hidden">17/01/2022</div>
<div class="cell" style="left:1043px;top:430px;width:115px;overflow:hidden">17/07/2022</div>
<div class="cell" style="left:1161px;top:430px;width:115px;overflow:hidden">21639808</div>
<div class="ab" style="left:1158px;top:429px;width:0;height:0;border-top:7px solid #0b7a14;border-right:7px solid transparent"></div>
<div class="cell" style="left:1279px;top:430px;width:40px;overflow:hidden">103765365</div>
<div class="ab" style="left:1276px;top:429px;width:0;height:0;border-top:7px solid #0b7a14;border-right:7px solid transparent"></div>
</div>
<div class="ab" style="left:24px;top:218px;width:9px;height:9px;border:2px solid #217346"></div>
<div class="ab" style="left:28px;top:222px;width:7px;height:7px;background:#fff"></div>
<div class="ab" style="left:29px;top:223px;width:5px;height:5px;background:#217346"></div>
<div class="ab" style="left:1345px;top:219px;width:1px;height:460px;background:#ababab"></div>
<div class="ab" style="left:1346px;top:203px;width:20px;height:476px;background:#e6e6e6"></div>
<div class="ab" style="left:1348px;top:221px;width:15px;height:443px;background:#dadada"></div>
<div class="ab" style="left:1348px;top:205px;width:15px;height:15px;background:#fff;border:1px solid #ababab"></div>
<div class="ab" style="left:1348px;top:220px;width:15px;height:39px;background:#fff;border:1px solid #ababab"></div>
<div class="ab" style="left:1348px;top:664px;width:15px;height:14px;background:#fff;border:1px solid #ababab"></div>
<svg class="ab" style="left:0;top:0" width="1366" height="768"><path d="M1351.5 215 H1359.5 L1355.5 210.5 Z" fill="#666"/><path d="M1351.5 668.5 H1359.5 L1355.5 673 Z" fill="#666"/></svg>
<div class="ab" style="left:0;top:678px;width:1346px;height:1px;background:#ababab"></div>
<div class="ab" style="left:0;top:679px;width:1366px;height:27px;background:#e6e6e6"></div>
<div class="ab" style="left:100px;top:678px;width:157px;height:24px;background:#fff;border-left:1px solid #ababab;border-right:1px solid #ababab"></div>
<div class="ab" style="left:100px;top:701px;width:157px;height:2px;background:#217346"></div>
<div class="t" style="left:112.40px;top:685.00px;font-size:13px;color:#217346;transform:scaleX(0.9765);font-weight:bold;">resumenCMContratos</div>
<div class="ab" style="left:836px;top:685px;width:494px;height:15px;background:#dadada"></div>
<div class="ab" style="left:836px;top:685px;width:15px;height:15px;background:#fff;border:1px solid #ababab"></div>
<div class="ab" style="left:851px;top:685px;width:26px;height:15px;background:#fff;border:1px solid #ababab"></div>
<div class="ab" style="left:1332px;top:685px;width:15px;height:15px;background:#fff;border:1px solid #ababab"></div>
<svg class="ab" style="left:0;top:0" width="1366" height="768">
<path d="M31 687.5 L27.5 691 L31 694.5 Z" fill="#b5b5b5"/><path d="M56 687.5 L59.5 691 L56 694.5 Z" fill="#b5b5b5"/>
<circle cx="297.5" cy="691.5" r="6.8" fill="none" stroke="#777" stroke-width="1.2"/><path d="M297.5 687.5 V695.5 M293.5 691.5 H301.5" stroke="#777" stroke-width="1.4"/>
<rect x="819" y="687" width="2" height="2" fill="#aaa"/><rect x="819" y="691" width="2" height="2" fill="#aaa"/><rect x="819" y="695" width="2" height="2" fill="#aaa"/>
<path d="M844.5 688.5 L840.5 692.5 L844.5 696.5 Z" fill="#666"/><path d="M1337.8 688.5 L1341.8 692.5 L1337.8 696.5 Z" fill="#666"/>
</svg>
<div class="ab" style="left:0;top:706px;width:1366px;height:1px;background:#c6c6c6"></div>
<div class="ab" style="left:0;top:707px;width:1366px;height:21px;background:#f3f3f3"></div>
<div class="ab" style="left:1080px;top:707px;width:38px;height:21px;background:#c6c6c6"></div>
<svg class="ab" style="left:0;top:0" width="1366" height="768">
<g fill="none" stroke="#666" stroke-width="1"><rect x="1092.5" y="710.5" width="13" height="12"/><path d="M1096.5 710.5 V722.5 M1101.5 710.5 V722.5 M1092.5 714.5 H1105.5 M1092.5 718.5 H1105.5"/></g>
<g fill="none" stroke="#666" stroke-width="1"><rect x="1130.5" y="710.5" width="13" height="12"/><rect x="1133.5" y="713.5" width="7" height="6"/><path d="M1135 715.5 H1139 M1135 717.5 H1139"/></g>
<g fill="none" stroke="#666" stroke-width="1"><rect x="1168.5" y="710.5" width="13" height="12"/><path d="M1172.5 710.5 V716.5 H1177.5 V710.5"/></g>
<rect x="1200" y="716" width="6" height="2" fill="#555"/><rect x="1209" y="716.5" width="100" height="1" fill="#999"/><rect x="1256" y="711" width="5" height="12" fill="#666"/>
<path d="M1313 717 H1320 M1316.5 713.5 V720.5" stroke="#555" stroke-width="2"/>
</svg>
<div class="t" style="left:1331.00px;top:710.47px;font-size:11.5px;color:#444;transform:scaleX(0.9177);">100%</div>
<div class="ab" style="left:0;top:728px;width:1366px;height:40px;background:#d4d4d4"></div>
<div class="ab" style="left:48px;top:729px;width:343px;height:39px;background:#fff;border-left:1px solid #c8c8c8"></div>
<div class="t" style="left:88.00px;top:741.43px;font-size:14.5px;color:#333;">Escribe aquí para buscar</div>
<div class="ab" style="left:834px;top:728px;width:45px;height:40px;background:#ececec"></div>
<svg class="ab" style="left:0;top:0" width="1366" height="768">
<path d="M16 741.8 L21.8 741 V747.2 H16 Z M22.8 740.9 L32 739.8 V747.2 H22.8 Z M16 748.2 H21.8 V754.6 L16 753.9 Z M22.8 748.2 H32 V756 L22.8 754.8 Z" fill="#000"/>
<circle cx="70.5" cy="745.2" r="5.2" fill="none" stroke="#111" stroke-width="1.1"/><path d="M66.8 749 L60.2 755.6" stroke="#111" stroke-width="1.2"/>
<circle cx="415.7" cy="747.7" r="6.3" fill="none" stroke="#000" stroke-width="1.8"/>
<g fill="none" stroke="#000" stroke-width="1.2"><rect x="457.5" y="743.5" width="9" height="9"/><path d="M456 740.6 H467.5 M456 755.4 H467.5 M471.5 746 V755.5"/></g><rect x="470" y="740.5" width="2.5" height="3" fill="#000"/>
<path d="M504 741 H510.5 L512 742.5 H504 Z" fill="#E8A917"/><rect x="504" y="741.5" width="21.5" height="14.5" rx="0.5" fill="#F8D775"/><rect x="504" y="741" width="7" height="2" fill="#E3A21A"/>
<path d="M508 756 V749.5 H521.5 V756 H517.5 V752.5 H512 V756 Z" fill="#3C8FDD"/>
<circle cx="563.7" cy="747.7" r="11" fill="#DB4437"/>
<path d="M563.7 747.7 L554.2 742.2 A11 11 0 0 0 558.2 757.2 Z" fill="#0F9D58"/>
<path d="M563.7 747.7 L558.2 757.2 A11 11 0 0 0 574.7 747.7 L574.6 746.5 Z" fill="#FFCD40"/>
<path d="M563.7 747.7 L574.7 747.7 A11 11 0 0 0 573.2 742.2 L563.7 742.2 Z" fill="#FFCD40"/>
<circle cx="563.7" cy="747.7" r="5" fill="#fff"/><circle cx="563.7" cy="747.7" r="4" fill="#4285F4"/>
<path d="M601 736 H608 L605.5 738.5 L609 742 L606.5 744.5 L603 741 L601 743 Z" fill="#1E7BE8"/>
<path d="M606 746 V743.5 A5 5 0 0 1 616 743.5 V746" fill="none" stroke="#888" stroke-width="2"/>
<rect x="604" y="746" width="14" height="9" rx="1" fill="#555"/><rect x="604" y="746" width="14" height="3" fill="#777"/>
<path d="M624.5 758.8 H617 L619.5 756.3 L616 752.8 L618.5 750.3 L622 753.8 L624.5 751.3 Z" fill="#22B535"/>
<rect x="650" y="735.7" width="24" height="24.3" rx="2" fill="#4B2F86"/>
<circle cx="662" cy="748" r="9.6" fill="none" stroke="#c9c9c9" stroke-width="3" stroke-dasharray="2.4 2.6"/><circle cx="662" cy="748" r="7.6" fill="#161616" stroke="#d0d0d0" stroke-width="1.6"/>
<text x="650.8" y="746.3" font-size="6.6" font-weight="bold" fill="#F28C28" stroke="#000" stroke-width="0.25" font-family="Liberation Sans" textLength="22.5" lengthAdjust="spacingAndGlyphs">Java EE</text><text x="656.3" y="752.8" font-size="6.6" font-weight="bold" fill="#F28C28" stroke="#000" stroke-width="0.25" font-family="Liberation Sans" textLength="11.5" lengthAdjust="spacingAndGlyphs">IDE</text>
<ellipse cx="709.5" cy="749.5" rx="10.5" ry="8" fill="#CFE6F7" stroke="#7FB2DC" stroke-width="0.8" transform="rotate(-15 709.5 749.5)"/>
<circle cx="703" cy="750" r="1.8" fill="#E23B3B"/><circle cx="706" cy="745.5" r="1.7" fill="#4CB04C"/><circle cx="710.5" cy="744" r="1.7" fill="#F5C518"/><circle cx="709" cy="751" r="1.2" fill="#5AA0E0"/>
<path d="M712 758 L720.5 739" stroke="#E07B1B" stroke-width="2"/><path d="M719.5 740 L722.5 736.8 L721.5 741.5 Z" fill="#9A6A3A"/>
<defs><linearGradient id="np" x1="0" y1="0" x2="1" y2="1"><stop offset="0" stop-color="#A9DDF0"/><stop offset="1" stop-color="#5FB3D6"/></linearGradient><linearGradient id="mb" x1="0" y1="0" x2="0" y2="1"><stop offset="0" stop-color="#E4EEFB"/><stop offset="1" stop-color="#B9CFF0"/></linearGradient></defs>
<rect x="749" y="737" width="17" height="20" rx="1.5" fill="url(#mb)" stroke="#7BA3DB" stroke-width="1"/><path d="M749.5 743.5 H765.5 M749.5 750 H765.5" stroke="#7BA3DB" stroke-width="1"/>
<circle cx="764" cy="752" r="6.6" fill="#19B01E"/><path d="M761.8 748.6 V755.4 L767.3 752 Z" fill="#fff"/>
<path d="M805.5 739 L818 739.5 L816.5 757.8 L797.3 751.8 Z" fill="url(#np)"/>
<path d="M818 739.5 L819.6 756.5 L816.5 757.8 Z" fill="#E8DCC0" stroke="#B9A77A" stroke-width="0.5"/>
<path d="M805.5 738.3 L818 738.8" stroke="#8a8a8a" stroke-width="1.6" stroke-dasharray="0.9 0.9"/>
<rect x="834" y="728" width="45" height="40" fill="#ebebeb"/><rect x="878" y="728" width="1" height="40" fill="#c8c8c8"/>
<rect x="859.5" y="739.5" width="9.5" height="16.5" fill="#fff" stroke="#1E7145" stroke-width="1"/>
<rect x="860.5" y="741.5" width="7.5" height="2" fill="#1E7145"/><rect x="860.5" y="745.3" width="7.5" height="2" fill="#1E7145"/><rect x="860.5" y="749.1" width="7.5" height="2" fill="#1E7145"/><rect x="860.5" y="752.9" width="7.5" height="2" fill="#1E7145"/><rect x="862.8" y="740" width="0.9" height="16" fill="#fff"/>
<path d="M846.6 739 L859.9 736.6 V759 L846.6 756.6 Z" fill="#1D6F42"/>
<path d="M849.8 743.5 L855.3 752.5 M855.3 743.5 L849.8 752.5" stroke="#fff" stroke-width="2.1"/>
<rect x="495" y="766" width="40" height="2" fill="#0F6CBD"/>
<rect x="544" y="766" width="40" height="2" fill="#0F6CBD"/>
<rect x="593" y="766" width="40" height="2" fill="#0F6CBD"/>
<rect x="642" y="766" width="40" height="2" fill="#0F6CBD"/>
<rect x="691" y="766" width="40" height="2" fill="#0F6CBD"/>
<rect x="740" y="766" width="40" height="2" fill="#0F6CBD"/>
<rect x="789" y="766" width="40" height="2" fill="#0F6CBD"/>
<rect x="834" y="766" width="45" height="2" fill="#0F6CBD"/>
<path d="M1018 754 C1014 754 1014 747.5 1018.5 747.5 C1018.5 741.5 1026 740 1028 744 C1030 739 1037.5 741 1036 747 C1039 748 1038 754 1034 754 Z" fill="#DDEEFB" stroke="#8FC3E9" stroke-width="1"/>
<path d="M1026 746.5 L1022.5 751.5 H1025.5 L1023 757.3 L1029 750.5 H1026 L1028.5 746.5 Z" fill="#F6B81A"/>
<path d="M1093.5 750.5 L1099.2 744.3 L1105 750.5" fill="none" stroke="#111" stroke-width="1.4"/>
<path d="M1120 742 A8 8 0 0 1 1127 742 M1120 754 A8 8 0 0 0 1127 754" fill="none" stroke="#111" stroke-width="1.1"/><rect x="1119.5" y="744.5" width="7" height="6.5" rx="1.3" fill="none" stroke="#111" stroke-width="1.1"/><path d="M1126.5 747 L1129.3 745.5 V750 L1126.5 748.5" fill="none" stroke="#111" stroke-width="1.1"/>
<path d="M1139 747.5 H1142 M1140.5 742.5 V745 M1143 742.5 V745 M1139.5 745 H1144 V748 A2 2 0 0 1 1139.5 748 Z M1141.8 750 V753" fill="none" stroke="#111" stroke-width="1"/>
<rect x="1144.5" y="744.5" width="9" height="7" fill="none" stroke="#111" stroke-width="1.1"/><rect x="1146" y="746" width="6" height="4" fill="#111"/><rect x="1154" y="746.5" width="1.2" height="3" fill="#111"/>
<g fill="none" stroke="#111" stroke-width="1.1"><rect x="1165.5" y="743.5" width="13" height="8"/><path d="M1171.5 751.5 V754.5 M1168.5 754.5 H1175 M1163.5 742.5 V754.5"/><rect x="1163.5" y="742.5" width="4" height="3"/></g>
<path d="M1187.5 746 H1190.5 L1194 742.8 V753 L1190.5 750 H1187.5 Z" fill="none" stroke="#111" stroke-width="1.1"/><path d="M1196.5 745.5 L1200.5 749.5 M1200.5 745.5 L1196.5 749.5" stroke="#111" stroke-width="1.1"/>
<path d="M1325 740 H1341 V752.5 H1331 L1328 755.5 V752.5 H1325 Z" fill="#000"/><path d="M1328 743.5 H1338 M1328 746.5 H1338 M1328 749.5 H1334" stroke="#fff" stroke-width="1"/>
<circle cx="1340.3" cy="755.3" r="7.8" fill="#d9d9d9" stroke="#888" stroke-width="1"/>
<text x="1336.6" y="759.7" font-size="11" fill="#111" font-family="Liberation Sans">3</text>
<rect x="1361" y="728" width="1" height="40" fill="#bbb"/>
</svg>
<div class="t" style="left:1046.00px;top:742.05px;font-size:14px;color:#222;transform:scaleX(0.9271);">20°C</div>
<div class="t" style="left:1215.60px;top:741.54px;font-size:12px;color:#222;transform:scaleX(0.7245);">ESP</div>
<div class="t" style="left:1251.60px;top:732.64px;font-size:12px;color:#222;transform:scaleX(0.9574);">4:22 p. m.</div>
<div class="t" style="left:1249.20px;top:750.44px;font-size:12px;color:#222;transform:scaleX(0.9573);">23/03/2022</div>
</body></html>
